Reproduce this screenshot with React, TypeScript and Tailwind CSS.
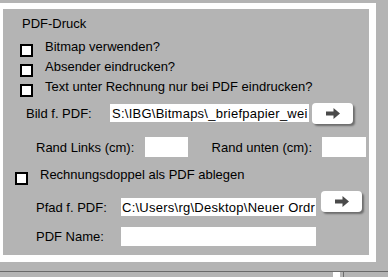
const ArrowButton = () => (
  <button className="w-[41px] h-[21px] bg-white rounded-[4px] shadow-[2px_2px_2px_rgba(0,0,0,0.4)] flex items-center justify-center">
    <svg width="14" height="11" viewBox="0 0 14 11">
      <path d="M0 3.5h7.5V0L14 5.5 7.5 11V7.5H0z" fill="#4a4a4a" />
    </svg>
  </button>
);

const Box = ({ className = "" }: { className?: string }) => (
  <div className={`w-[13px] h-[13px] shrink-0 border-2 border-black bg-white ${className}`} />
);

const checks = [
  "Bitmap verwenden?",
  "Absender eindrucken?",
  "Text unter Rechnung nur bei PDF eindrucken?",
];

export default function App() {
  return (
    <div className="w-[388px] h-[277px] overflow-hidden bg-[#b4b4b4] pt-[3px] text-[13px] leading-[15px] text-black font-['Liberation_Sans',Arial,sans-serif]">
      <div className="w-[376px] h-[259px] border-white border-t-[6px] border-r-[7px] border-b-[7px] border-l-[3px] flex flex-col">
        <div className="pt-[7px] pl-[19px]">PDF-Druck</div>

        <div className="mt-[8px] flex flex-col">
          {checks.map((c) => (
            <div key={c} className="h-[20px] flex items-start pl-[17px]">
              <Box className="mt-[5px]" />
              <span className="ml-[12px]">{c}</span>
            </div>
          ))}
        </div>

        <div className="mt-[3px] h-[22px] flex items-center">
          <span className="pl-[23px] w-[107px] shrink-0">Bild f. PDF:</span>
          <div className="w-[199px] h-[18px] bg-white pl-[2px] whitespace-nowrap tracking-[0.25px] flex items-center">
            S:\IBG\Bitmaps\_briefpapier_wei
          </div>
          <div className="ml-[3px]">
            <ArrowButton />
          </div>
        </div>

        <div className="mt-[13px] h-[20px] flex items-center">
          <span className="pl-[33px] w-[142px] shrink-0">Rand Links (cm):</span>
          <div className="w-[43px] h-[20px] bg-white" />
          <span className="w-[124px] text-right shrink-0">Rand unten (cm):</span>
          <div className="ml-[10px] w-[44px] h-[20px] bg-white" />
        </div>

        <div className="mt-[10px] h-[20px] flex items-start pl-[12px]">
          <Box className="mt-[5px]" />
          <span className="ml-[12px]">Rechnungsdoppel als PDF ablegen</span>
        </div>

        <div className="mt-[4px] flex items-start">
          <div className="mt-[7px] h-[18px] flex items-center">
            <span className="pl-[33px] w-[118px] shrink-0">Pfad f. PDF:</span>
            <div className="w-[195px] h-[18px] bg-white pl-[1px] whitespace-nowrap tracking-[0.25px] flex items-center">
              C:\Users\rg\Desktop\Neuer Ordr
            </div>
          </div>
          <div className="ml-[5px]">
            <ArrowButton />
          </div>
        </div>

        <div className="mt-[11px] h-[19px] flex items-center">
          <span className="pl-[33px] w-[118px] shrink-0">PDF Name:</span>
          <div className="w-[195px] h-[19px] bg-white" />
        </div>
      </div>

      <div className="mt-[9px] h-px bg-[#6a6a6a]" />
      <div className="h-[5px] flex">
        <div className="ml-[333px] w-[7px] bg-white" />
        <div className="ml-[3px] w-px bg-[#6a6a6a]" />
      </div>
    </div>
  );
}
